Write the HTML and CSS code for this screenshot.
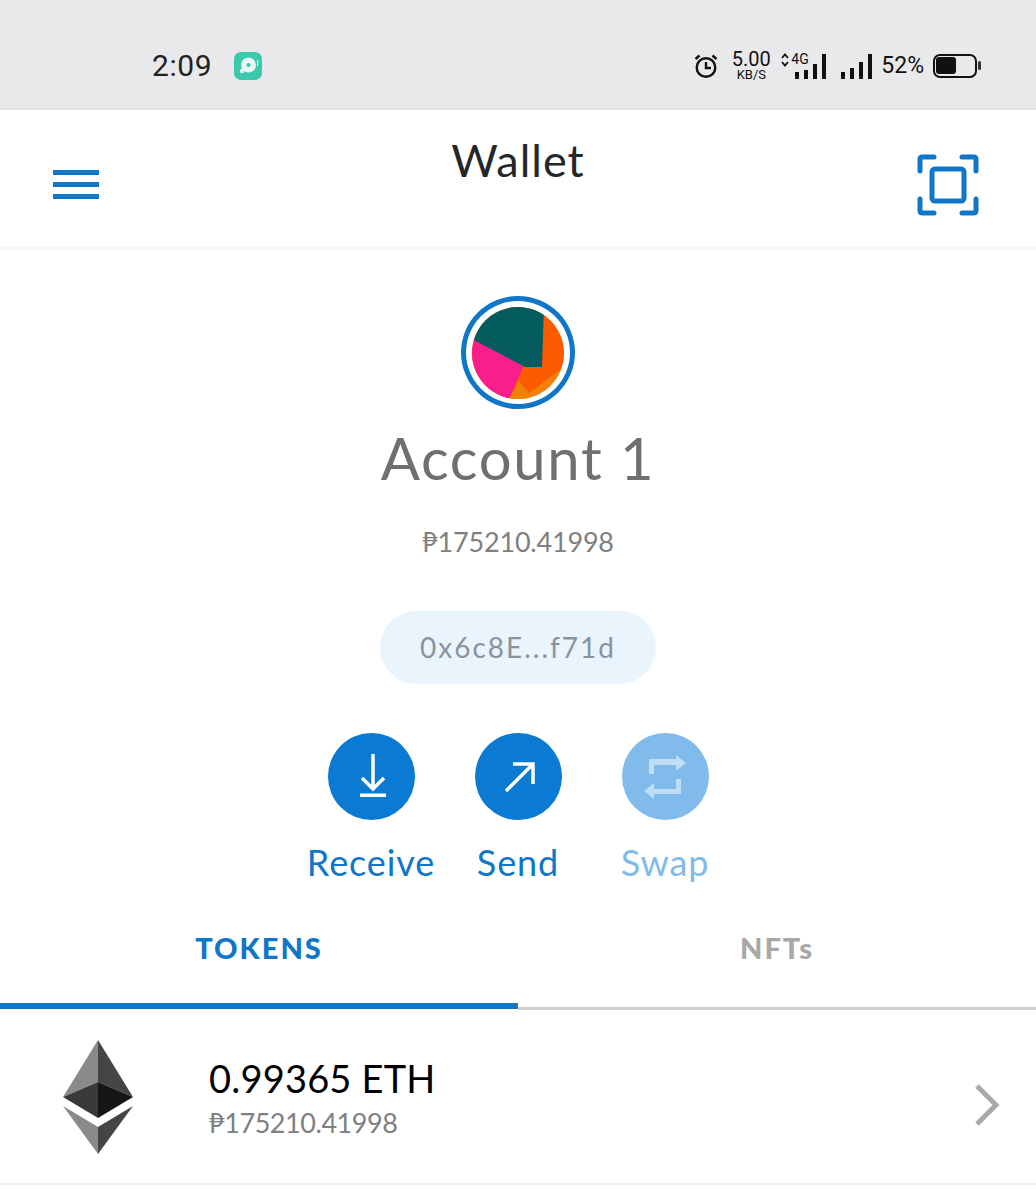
FILE: index.html
```html
<!DOCTYPE html>
<html lang="en">
<head>
	<meta charset="UTF-8">
	<title>Wallet</title>
	<link rel="stylesheet" href="styles.css">
</head>
<body>
	<div class="status">
		<div class="status-left">
			<span class="clock">2:09</span>
			<svg class="app-icon" width="30" height="30" viewBox="0 0 30 30">
				<rect x="1" y="1" width="28" height="28" rx="7" fill="#3cc8ac"/>
				<circle cx="15.5" cy="14" r="7.5" fill="#e8f7f3"/>
				<circle cx="15.5" cy="14" r="2" fill="#3cc8ac"/>
				<circle cx="9" cy="20" r="2.2" fill="#e8f7f3"/>
				<rect x="24" y="9" width="1.2" height="6" fill="#e8f7f3"/>
			</svg>
		</div>
		<div class="status-right">
			<svg width="24" height="24" viewBox="0 0 24 24" fill="none" stroke="#111" stroke-width="2.400">
				<circle cx="12" cy="13.500" r="9.300"/>
				<path d="M12 8v6h5M1.500 5l4-3.500M22.500 5l-4-3.500"/>
			</svg>
			<div class="speed"><b>5.00</b><i>KB/S</i></div>
			<div class="sim sim-one">
				<svg class="updown" width="8" height="14" viewBox="0 0 8 14" fill="none" stroke="#111" stroke-width="1.800">
					<path d="M1 5l3-3.500L7 5M1 9l3 3.500L7 9"/>
				</svg>
				<span class="net">4G</span>
				<div class="bars">
					<i class="b1"></i><i class="b2"></i><i class="b3"></i><i class="b4"></i>
				</div>
			</div>
			<div class="bars sim-two">
				<i class="b1"></i><i class="b2"></i><i class="b3"></i><i class="b4"></i>
			</div>
			<span class="pct">52%</span>
			<div class="battery"><div class="charge"></div></div>
		</div>
	</div>

	<div class="nav">
		<svg width="46" height="29" viewBox="0 0 46 29" fill="#0f76c8">
			<rect y="0" width="46" height="5"/>
			<rect y="12" width="46" height="5"/>
			<rect y="24" width="46" height="5"/>
		</svg>
		<h1>Wallet</h1>
		<svg width="62" height="62" viewBox="0 0 62 62" fill="none" stroke="#0f76c8" stroke-width="5" stroke-linecap="round" stroke-linejoin="round">
			<path d="M3 17V5.500Q3 3 5.500 3H17M45 3h11.500Q59 3 59 5.500V17M59 45v11.500Q59 59 56.500 59H45M17 59H5.500Q3 59 3 56.500V45"/>
			<rect x="15" y="15" width="32" height="32" rx="3"/>
		</svg>
	</div>

	<div class="account">
		<div class="avatar">
			<svg width="92" height="92" viewBox="0 0 92 92">
				<defs><clipPath id="round"><circle cx="46" cy="46" r="46"/></clipPath></defs>
				<g clip-path="url(#round)">
					<rect width="92" height="92" fill="#fc5c00"/>
					<path d="M37 92L47 74L57 86L92 60V92Z" fill="#f28205"/>
					<path d="M0 31L52 58L37 92H0Z" fill="#f91e8c"/>
					<path d="M0 0H72L70 60H53L0 32Z" fill="#055c5f"/>
				</g>
			</svg>
		</div>
		<h2>Account 1</h2>
		<p class="fiat">₱175210.41998</p>
		<div class="address">0x6c8E...f71d</div>
		<div class="actions">
			<div class="action">
				<div class="circle">
					<svg class="icon-receive" width="32" height="43" viewBox="0 0 32 43" fill="none" stroke="#fff" stroke-width="3.500">
						<path d="M16 0V35M5 24l11 11 11-11M3 41.200h26"/>
					</svg>
				</div>
				<span>Receive</span>
			</div>
			<div class="action">
				<div class="circle">
					<svg class="icon-send" width="32" height="32" viewBox="0 0 32 32" fill="none" stroke="#fff" stroke-width="3.500">
						<path d="M2 30L29 3M9 3h20v20"/>
					</svg>
				</div>
				<span>Send</span>
			</div>
			<div class="action off">
				<div class="circle">
					<svg width="42" height="44" viewBox="0 0 42 44" fill="#fff" opacity=".5">
						<path d="M5 4H32V0L42 8 32 16V10H10V19H5ZM37 24V39H10V44L0 36 10 28V34H32V24Z"/>
					</svg>
				</div>
				<span>Swap</span>
			</div>
		</div>
	</div>

	<div class="tabs">
		<div class="tab active">TOKENS</div>
		<div class="tab">NFTs</div>
	</div>

	<div class="token">
		<svg class="eth" width="70" height="114" viewBox="0 0 70 114">
			<path d="M35 0L0 57 35 42Z" fill="#8a8a8a"/>
			<path d="M35 0L70 57 35 42Z" fill="#454545"/>
			<path d="M0 57L35 42V78Z" fill="#3a3a3a"/>
			<path d="M70 57L35 42V78Z" fill="#161616"/>
			<path d="M0 66L35 87V114Z" fill="#8a8a8a"/>
			<path d="M70 66L35 87V114Z" fill="#454545"/>
		</svg>
		<div class="token-info">
			<div class="amount">0.99365 ETH</div>
			<div class="token-fiat">₱175210.41998</div>
		</div>
		<svg class="chev" width="26" height="42" viewBox="0 0 26 42" fill="none" stroke="#a9a9a9" stroke-width="5">
			<path d="M3 2l19 19L3 40"/>
		</svg>
	</div>
</body>
</html>
```
FILE: styles.css
```css
*{margin:0;padding:0;box-sizing:border-box;}
body{font-family:"Lato","Noto Sans",sans-serif;background:#fff;height:1200px;overflow:hidden;}

.status{height:110px;background:#e9e9eb;display:flex;justify-content:space-between;align-items:center;padding:22px 59px 0 152px;border-bottom:1px solid #e4e4e4;}
.status-left{display:flex;align-items:center;gap:21px;}
.clock{font-size:30px;color:#222;font-family:"Roboto",sans-serif;letter-spacing:.6px;}
.status-right{display:flex;align-items:center;color:#111;font-family:"Roboto",sans-serif;}
.speed{margin-left:13px;width:40px;display:flex;flex-direction:column;align-items:center;}
.speed b{font-weight:400;font-size:20px;line-height:18px;}
.speed i{font-style:normal;font-size:13px;line-height:13px;}
.sim{position:relative;margin-left:10px;width:46px;height:26px;}
.net{position:absolute;left:10px;top:-2px;font-size:14px;line-height:16px;}
.updown{position:absolute;left:0;top:0;}
.sim .bars{position:absolute;left:14px;bottom:0;}
.bars{display:flex;align-items:flex-end;gap:5px;height:26px;}
.bars i{display:block;width:4px;background:#111;}
.b1{height:7px;}
.b2{height:11px;}
.b3{height:17px;}
.b4{height:25px;}
.sim .b2{height:9px;}
.sim .b3{height:15px;}
.sim-two{margin-left:14px;}
.pct{font-size:23px;margin-left:9px;}
.battery{position:relative;margin-left:9px;width:44px;height:24px;border:2.500px solid #111;border-radius:7px;padding:1px;}
.battery:after{content:"";position:absolute;right:-6px;top:5px;width:3px;height:9px;background:#333;border-radius:2px;}
.charge{width:20px;height:17px;background:#111;border-radius:3px;}

.nav{height:140px;display:flex;justify-content:space-between;align-items:center;padding:12px 57px 0 53px;border-bottom:3px solid #f6f6f6;position:relative;}
.nav h1{position:absolute;left:0;right:0;top:24px;text-align:center;font-size:45px;font-weight:400;color:#24272a;line-height:52px;letter-spacing:1px;}

.account{display:flex;flex-direction:column;align-items:center;}
.avatar{margin-top:46px;width:114px;height:113px;border:5px solid #0f76c8;border-radius:50%;padding:6px;}
.avatar svg{display:block;}
h2{margin-top:14px;font-size:58px;font-weight:400;color:#6f6f6f;line-height:70px;letter-spacing:1.700px;}
.fiat{margin-top:31px;font-size:27px;color:#808080;line-height:36px;letter-spacing:-.2px;}
.address{margin-top:51px;width:276px;height:73px;border-radius:37px;background:#eaf4fd;color:#8a929b;font-size:28px;line-height:73px;text-align:center;letter-spacing:2px;}
.actions{margin-top:49px;display:flex;gap:60px;}
.action{width:87px;display:flex;flex-direction:column;align-items:center;}
.circle{width:87px;height:87px;border-radius:50%;background:#0a7ad2;display:flex;align-items:center;justify-content:center;}
.icon-receive{margin-left:3px;margin-bottom:2px;}
.icon-send{margin-left:3px;}
.action span{margin-top:19px;font-size:36px;line-height:46px;color:#0f76c8;white-space:nowrap;letter-spacing:.9px;}
.off .circle{background:#81bbeb;}
.off span{color:#81bbeb;}

.tabs{margin-top:27px;display:flex;align-items:flex-start;}
.tab{flex:1;height:98px;text-align:center;font-size:29px;font-weight:900;letter-spacing:2px;color:#a8a8a8;line-height:72px;border-bottom:3px solid #cfcfcf;}
.tab.active{height:97px;color:#0f76c8;border-bottom:6px solid #0f76c8;}

.token{height:175px;display:flex;align-items:center;padding:0 36px 0 63px;border-bottom:2px solid #eee;}
.token-info{margin-left:76px;flex:1;margin-top:6px;}
.amount{font-size:38px;line-height:46px;color:#000;letter-spacing:.2px;}
.token-fiat{font-size:27px;line-height:44px;color:#808080;letter-spacing:-.45px;}
.chev{margin-top:17px;}
```
